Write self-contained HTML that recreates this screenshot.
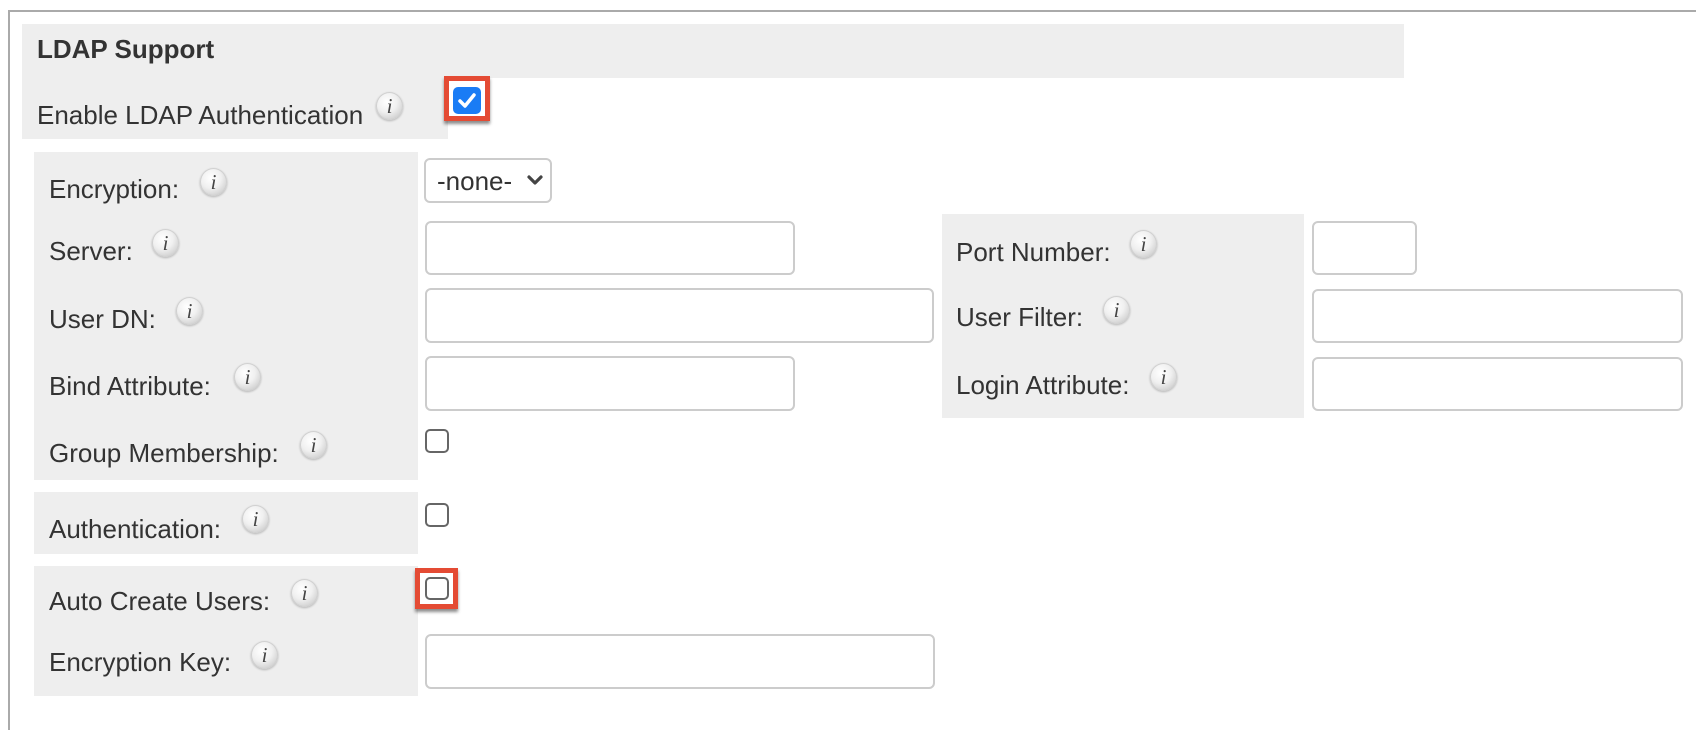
<!DOCTYPE html>
<html><head><meta charset="utf-8"><style>
*{margin:0;padding:0;box-sizing:border-box}
body{width:1696px;height:710px;background:#fff;position:relative;overflow:hidden;font-family:"Liberation Sans",Arial,sans-serif;color:#333}
.a{position:absolute}
.g{position:absolute;background:#eeeeee}
.t{position:absolute;font-size:26px;line-height:30px;white-space:nowrap;color:#333}
.in{position:absolute;border:2px solid #cccccc;border-radius:6px;background:#fff}
.cb{position:absolute;width:24px;height:24px;border:2px solid #666;border-radius:5px;background:#fff}
.i{position:absolute;width:27px;height:28px;border-radius:50%;background:radial-gradient(circle at 40% 35%,#ffffff 0%,#f0f0f0 45%,#c0c0c0 100%);box-shadow:0 1px 2px rgba(0,0,0,.25);border:1px solid #d0d0d0;text-align:center;font:italic 21px/26px "Liberation Serif",serif;color:#444}
</style></head><body>
<div class="a" style="left:8px;top:10px;width:1700px;height:720px;border-left:2px solid #aaa;border-top:2px solid #aaa"></div>

<div class="g" style="left:22px;top:24px;width:1382px;height:54px"></div>
<div class="g" style="left:22px;top:78px;width:426px;height:61px"></div>
<div class="t" style="left:37px;top:34px;font-weight:bold;">LDAP Support</div>
<div class="t" style="left:37px;top:100px;">Enable LDAP Authentication</div>
<div class="i" style="left:376px;top:92px">i</div>
<div class="a" style="left:444px;top:76px;width:46px;height:45px;border:5px solid #e44b34;box-shadow:0 3px 3px rgba(0,0,0,.45);background:#fff"></div>
<div class="a" style="left:453px;top:87px;width:28px;height:27px;border-radius:5px;background:#1a7cf5">
<svg width="28" height="27" viewBox="0 0 28 27"><path d="M7 14 L12 19 L21 8" fill="none" stroke="#fff" stroke-width="3.5" stroke-linecap="round" stroke-linejoin="round"/></svg></div>

<div class="g" style="left:34px;top:152px;width:384px;height:328px"></div>
<div class="g" style="left:34px;top:492px;width:384px;height:62px"></div>
<div class="g" style="left:34px;top:566px;width:384px;height:130px"></div>
<div class="g" style="left:942px;top:214px;width:362px;height:204px"></div>

<div class="t" style="left:49px;top:174px">Encryption:</div><div class="i" style="left:200px;top:168px">i</div>
<div class="t" style="left:49px;top:236px">Server:</div><div class="i" style="left:152px;top:229px">i</div>
<div class="t" style="left:49px;top:304px">User DN:</div><div class="i" style="left:176px;top:297px">i</div>
<div class="t" style="left:49px;top:371px">Bind Attribute:</div><div class="i" style="left:234px;top:363px">i</div>
<div class="t" style="left:49px;top:438px">Group Membership:</div><div class="i" style="left:300px;top:431px">i</div>
<div class="t" style="left:49px;top:514px">Authentication:</div><div class="i" style="left:242px;top:505px">i</div>
<div class="t" style="left:49px;top:586px">Auto Create Users:</div><div class="i" style="left:291px;top:579px">i</div>
<div class="t" style="left:49px;top:647px">Encryption Key:</div><div class="i" style="left:251px;top:641px">i</div>

<div class="t" style="left:956px;top:237px">Port Number:</div><div class="i" style="left:1130px;top:230px">i</div>
<div class="t" style="left:956px;top:302px">User Filter:</div><div class="i" style="left:1103px;top:296px">i</div>
<div class="t" style="left:956px;top:370px">Login Attribute:</div><div class="i" style="left:1150px;top:363px">i</div>

<div class="in" style="left:424px;top:158px;width:128px;height:45px"><span class="a" style="left:11px;top:6px;font-size:26px;line-height:30px;color:#333">-none-</span>
<svg class="a" style="left:100px;top:13px" width="18" height="14" viewBox="0 0 18 14"><path d="M3 4 L9 10 L15 4" fill="none" stroke="#444" stroke-width="3.2" stroke-linecap="round" stroke-linejoin="round"/></svg></div>
<div class="in" style="left:425px;top:221px;width:370px;height:54px"></div>
<div class="in" style="left:1312px;top:221px;width:105px;height:54px"></div>
<div class="in" style="left:425px;top:288px;width:509px;height:55px"></div>
<div class="in" style="left:1312px;top:289px;width:371px;height:54px"></div>
<div class="in" style="left:425px;top:356px;width:370px;height:55px"></div>
<div class="in" style="left:1312px;top:357px;width:371px;height:54px"></div>
<div class="in" style="left:425px;top:634px;width:510px;height:55px"></div>

<div class="cb" style="left:425px;top:429px"></div>
<div class="cb" style="left:425px;top:503px"></div>
<div class="a" style="left:415px;top:568px;width:43px;height:41px;border:5px solid #e44b34;box-shadow:0 3px 3px rgba(0,0,0,.45);background:#fff"></div>
<div class="cb" style="left:425px;top:577px;height:23px"></div>
</body></html>
